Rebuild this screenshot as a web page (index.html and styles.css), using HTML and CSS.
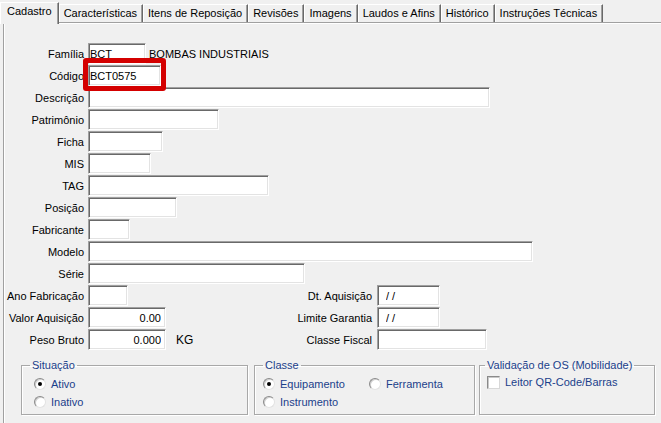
FILE: index.html
```html
<!DOCTYPE html>
<html lang="pt-BR">
<head>
  <meta charset="UTF-8" />
  <title>Cadastro de Equipamento</title>
  <link rel="stylesheet" href="styles.css">
</head>
<body>
  <div class="tabs">
    <div class="tab active">Cadastro</div>
    <div class="tab">Características</div>
    <div class="tab">Itens de Reposição</div>
    <div class="tab">Revisões</div>
    <div class="tab">Imagens</div>
    <div class="tab">Laudos e Afins</div>
    <div class="tab">Histórico</div>
    <div class="tab">Instruções Técnicas</div>
  </div>

  <div class="panel">
    <div class="row">
      <label class="lbl">Família</label>
      <input class="txt f-familia" value="BCT" readonly>
      <span class="desc">BOMBAS INDUSTRIAIS</span>
    </div>
    <div class="row">
      <label class="lbl">Código</label>
      <span class="mark"><input class="txt f-codigo" value="BCT0575" readonly></span>
    </div>
    <div class="row"><label class="lbl">Descrição</label><input class="txt f-descricao" readonly></div>
    <div class="row"><label class="lbl">Patrimônio</label><input class="txt f-patrimonio" readonly></div>
    <div class="row"><label class="lbl">Ficha</label><input class="txt f-ficha" readonly></div>
    <div class="row"><label class="lbl">MIS</label><input class="txt f-mis" readonly></div>
    <div class="row"><label class="lbl">TAG</label><input class="txt f-tag" readonly></div>
    <div class="row"><label class="lbl">Posição</label><input class="txt f-posicao" readonly></div>
    <div class="row"><label class="lbl">Fabricante</label><input class="txt f-fabricante" readonly></div>
    <div class="row"><label class="lbl">Modelo</label><input class="txt f-modelo" readonly></div>
    <div class="row"><label class="lbl">Série</label><input class="txt f-serie" readonly></div>

    <div class="row">
      <div class="cell left"><label class="lbl">Ano Fabricação</label><input class="txt f-ano" readonly></div>
      <div class="cell"><label class="lbl lbl-r">Dt. Aquisição</label><input class="txt f-data" value="/ /" readonly></div>
    </div>
    <div class="row">
      <div class="cell left"><label class="lbl">Valor Aquisição</label><input class="txt f-valor num" value="0.00" readonly></div>
      <div class="cell"><label class="lbl lbl-r">Limite Garantia</label><input class="txt f-data" value="/ /" readonly></div>
    </div>
    <div class="row">
      <div class="cell left"><label class="lbl">Peso Bruto</label><input class="txt f-valor num" value="0.000" readonly><span class="unit">KG</span></div>
      <div class="cell"><label class="lbl lbl-r">Classe Fiscal</label><input class="txt f-fiscal" readonly></div>
    </div>

    <div class="groups">
      <fieldset class="grp grp-situacao">
        <legend>Situação</legend>
        <div class="opts">
          <div class="opt"><span class="radio checked"></span>Ativo</div>
          <div class="opt"><span class="radio"></span>Inativo</div>
        </div>
      </fieldset>
      <fieldset class="grp grp-classe">
        <legend>Classe</legend>
        <div class="opts two">
          <div class="opt"><span class="radio checked"></span>Equipamento</div>
          <div class="opt"><span class="radio"></span>Ferramenta</div>
          <div class="opt"><span class="radio"></span>Instrumento</div>
        </div>
      </fieldset>
      <fieldset class="grp grp-validacao">
        <legend>Validação de OS (Mobilidade)</legend>
        <div class="opts">
          <div class="opt"><span class="check"></span>Leitor QR-Code/Barras</div>
        </div>
      </fieldset>
    </div>
  </div>
</body>
</html>
```

FILE: styles.css
```css
:root {
  --face: #f0f0f0;
  --shadow: #a0a0a0;
  --dark: #696969;
  --light: #e3e3e3;
  --caption: #1b3f8b;
}
html, body {
  margin: 0;
  height: 100%;
  overflow: hidden;
}
body {
  background: var(--face);
  font-family: "Liberation Sans", Arial, sans-serif;
  font-size: 11px;
  color: #000;
}

/* tab strip */
.tabs {
  display: flex;
  align-items: flex-end;
  height: 22px;
}
.tab {
  box-sizing: border-box;
  height: 18px;
  padding: 2px 5px 0 4px;
  line-height: 13px;
  background: var(--face);
  border-top: 1px solid #fff;
  border-left: 1px solid #fff;
  border-right: 1px solid var(--dark);
  box-shadow: inset -1px 0 var(--shadow);
  white-space: nowrap;
}
.tab.active {
  position: relative;
  z-index: 1;
  height: 22px;
  margin-bottom: -2px;
  padding: 2px 6px 0 6px;
}

/* page */
.panel {
  box-sizing: border-box;
  margin-left: 3px;
  height: 401px;
  padding-top: 20px;
  border-top: 1px solid var(--shadow);
  border-left: 1px solid var(--shadow);
  box-shadow: inset 1px 1px #fff;
}
.row {
  display: flex;
  align-items: center;
  height: 21px;
  margin-bottom: 1px;
}
.cell {
  display: flex;
  align-items: center;
}
.cell.left {
  width: 286px;
}
.lbl {
  width: 80px;
  margin-right: 4px;
  text-align: right;
  white-space: nowrap;
}
.lbl-r {
  width: 82px;
  margin-right: 5px;
}
.txt {
  box-sizing: border-box;
  height: 21px;
  margin: 0;
  padding: 0 1px;
  font: inherit;
  color: #000;
  background: #fff;
  border-style: solid;
  border-width: 1px;
  border-color: var(--shadow) #fff #fff var(--shadow);
  box-shadow: inset 1px 1px var(--dark), inset -1px -1px var(--light);
  outline: none;
}
.txt.num {
  text-align: right;
  padding-right: 4px;
}
.desc {
  margin-left: 3px;
}
.unit {
  margin-left: 10px;
  font-size: 12px;
}

.f-familia { width: 58px; }
.f-codigo { width: 73px; }
.f-descricao { width: 402px; }
.f-patrimonio { width: 131px; }
.f-ficha { width: 75px; }
.f-mis { width: 63px; }
.f-tag { width: 181px; }
.f-posicao { width: 89px; }
.f-fabricante { width: 42px; }
.f-modelo { width: 445px; }
.f-serie { width: 217px; }
.f-ano { width: 40px; }
.f-valor { width: 78px; }
.f-data { width: 63px; padding-left: 8px; }
.f-fiscal { width: 110px; }

/* red highlight drawn over the código field */
.mark {
  position: relative;
  display: inline-flex;
}
.mark::after {
  content: "";
  position: absolute;
  left: -5px;
  right: -5px;
  top: -7px;
  bottom: -5px;
  border: 5px solid #d40000;
  border-radius: 3px;
}

/* group boxes */
.groups {
  display: flex;
  align-items: flex-start;
  margin: 9px 0 0 17px;
}
.grp {
  box-sizing: border-box;
  margin: 0;
  padding: 0;
  min-width: 0;
  height: 56px;
  border: 1px solid #a8a8a8;
  box-shadow: inset 1px 1px #fff, 1px 1px #fff;
}
.grp legend {
  margin-left: 8px;
  padding: 0 2px;
  line-height: 13px;
  color: var(--caption);
}
.grp-situacao { width: 227px; margin-right: 6px; }
.grp-classe { width: 221px; margin-right: 4px; }
.grp-validacao { width: 176px; }
.grp-validacao legend { margin-left: 5px; }

.opts {
  padding: 3px 0 0 12px;
}
.grp-classe .opts { padding-left: 8px; }
.grp-validacao .opts { padding: 1px 0 0 7px; }
.opts.two {
  display: grid;
  grid-template-columns: 106px 1fr;
}
.opt {
  display: flex;
  align-items: center;
  height: 18px;
  color: var(--caption);
  white-space: nowrap;
}
.radio {
  position: relative;
  box-sizing: border-box;
  width: 12px;
  height: 12px;
  margin-right: 5px;
  border-radius: 50%;
  background: #fff;
  border: 1px solid;
  border-color: #8a8a8a #e2e2e2 #e2e2e2 #8a8a8a;
  box-shadow: inset 1px 1px #cfcfcf;
}
.radio.checked::after {
  content: "";
  position: absolute;
  left: 3px;
  top: 3px;
  width: 4px;
  height: 4px;
  border-radius: 50%;
  background: #000;
}
.check {
  box-sizing: border-box;
  width: 13px;
  height: 13px;
  margin-right: 5px;
  background: #fff;
  border: 1px solid;
  border-color: #8a8a8a #d8d8d8 #d8d8d8 #8a8a8a;
  box-shadow: inset 1px 1px #c8c8c8;
}
```
